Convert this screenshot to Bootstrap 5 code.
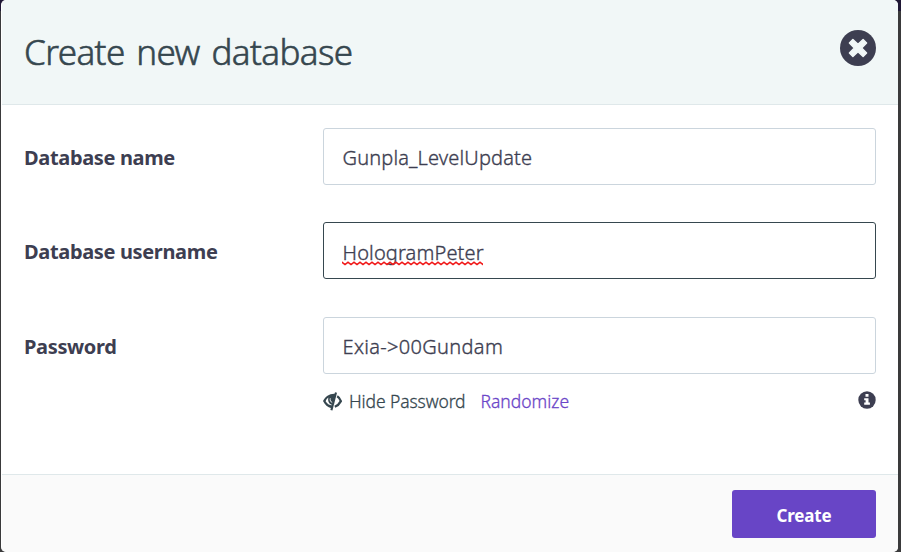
<!DOCTYPE html>
<html lang="en">
<head>
<meta charset="utf-8">
<meta name="viewport" content="width=device-width, initial-scale=1">
<title>Create new database</title>
<link href="https://cdn.jsdelivr.net/npm/bootstrap@5.3.0/dist/css/bootstrap.min.css" rel="stylesheet">
<style>
html,body{height:552px;overflow:hidden}
body{font-family:"Noto Sans","Open Sans",sans-serif;color:#3d3e51;background:linear-gradient(#1f1735 11px,#3a3a3b 11px)}
.dialog-box{width:897px;height:552px;margin-left:1px;background:#fff;border-left:1px solid #fff;border-radius:5px}
.dialog-head{height:105px;padding:0 22px;background:#f1f7f7;border-bottom:1px solid #dfe8ea;border-radius:5px 5px 0 0}
.dialog-title{font-size:35px;line-height:48px;color:#36474f;letter-spacing:-.6px;word-spacing:3.2px;font-weight:300;-webkit-text-stroke:.6px #36474f}
.close-btn{width:36px;height:36px;margin-top:-9px}
.dialog-body{height:369px;padding:23px 22px 0}
.field-row{height:57px;margin-bottom:37px}
.field-row.last-field{margin:38px 0 0}
.field-label{width:299px;font-size:20px;font-weight:700;letter-spacing:-.35px;padding-top:2px}
.form-control{height:57px;border:1px solid #cbd5dd;border-radius:3px;color:#3d3e51;font-size:20px;font-weight:300;line-height:30px;padding:14px 18.5px}
.form-control.current{border-color:#36474f;padding-top:15px}
.entry{display:inline-block;white-space:nowrap;letter-spacing:.15px;-webkit-text-stroke:.35px #3d3e51}
.entry-pass{letter-spacing:.32px}
.squiggle{left:-.5px;top:23px}
.help-row{margin:15px 0 0 299px;height:24px;font-size:17.5px;line-height:24px;font-weight:300;-webkit-text-stroke:.3px}
.eye-mark{margin-right:7px}
.help-text{color:#36474f;letter-spacing:-.1px}
.random-link{color:#6b46c8;margin-left:15px}
.info-mark{margin-top:-2px}
.dialog-foot{height:78px;padding:15px 22px 0;background:#fafafa;border-top:1px solid #dfe8ea;border-radius:0 0 5px 5px}
.create-btn{width:144px;height:48px;background:#6845c6;border:0;border-radius:3px;color:#fff;font-size:17px;font-weight:700;letter-spacing:-.2px;padding:3px 0 0}
</style>
</head>
<body>
<main class="dialog-box d-flex flex-column">
  <header class="dialog-head d-flex align-items-center justify-content-between">
    <h1 class="dialog-title mb-0">Create new database</h1>
    <button class="close-btn btn p-0 border-0 d-flex" type="button" aria-label="Close">
      <svg width="36" height="36" viewBox="0 0 36 36"><circle cx="18" cy="18" r="18" fill="#3d3e51"/><path d="M12.900 9.400 18 14.300 23.100 9.400 26.600 12.900 21.700 18 26.600 23.100 23.100 26.600 18 21.700 12.900 26.600 9.400 23.100 14.300 18 9.400 12.900Z" fill="#f1f7f7" stroke="#f1f7f7" stroke-width="1.400" stroke-linejoin="round"/></svg>
    </button>
  </header>
  <form class="dialog-body">
    <div class="field-row d-flex align-items-center">
      <div class="field-label flex-shrink-0">Database name</div>
      <div class="form-control"><span class="entry">Gunpla_LevelUpdate</span></div>
    </div>
    <div class="field-row mb-0 d-flex align-items-center">
      <div class="field-label flex-shrink-0">Database username</div>
      <div class="form-control current"><span class="entry position-relative">HologramPeter<svg class="squiggle position-absolute" width="141" height="5"><defs><pattern id="wave" width="6" height="5" patternUnits="userSpaceOnUse"><path d="M-1.5 2.5 0 1.200 3 3.600 6 1.200 7.500 2.400" fill="none" stroke="#f01818" stroke-width="1.600"/></pattern></defs><rect width="141" height="5" fill="url(#wave)"/></svg></span></div>
    </div>
    <div class="field-row last-field d-flex align-items-center">
      <div class="field-label flex-shrink-0">Password</div>
      <div class="form-control"><span class="entry entry-pass">Exia-&gt;00Gundam</span></div>
    </div>
    <div class="help-row d-flex align-items-center">
      <svg class="eye-mark flex-shrink-0" width="19" height="19" viewBox="0 0 19 19"><path d="M13 .4 8.400 18.200" stroke="#36474f" stroke-width="2.100"/><path d="M12.400 1.700C6.500 1.200 2.600 4.200 0 9c1.800 3.800 4.500 6.300 8.600 7.200l.7-2.600C6.200 13.200 3.900 11.500 2.600 9.200 3.300 7.600 4.200 6.500 5.400 5.500 4.500 9.200 6 12.200 9.400 12.900Z" fill="#36474f"/><path d="M7 5.500C6.300 8.200 7.200 10.300 9.200 10.800L11 3.500Z" fill="#36474f"/><path d="M7.300 6.300C6.800 8.300 7.600 10 9.200 10.500" fill="none" stroke="#fff" stroke-width=".9"/><path d="M14.200 4.300C16 5.300 17 7 17.900 9.100 16.500 11.800 14.700 13.600 11.800 14.800" fill="none" stroke="#36474f" stroke-width="2.300"/></svg>
      <span class="help-text">Hide Password</span>
      <a class="random-link text-decoration-none" href="#">Randomize</a>
      <svg class="info-mark ms-auto" width="18" height="18" viewBox="0 0 18 18"><circle cx="9" cy="9" r="8.700" fill="#3d3e51"/><path d="M7.500 3h3v2.700h-3zM6.200 7.200h4.300v4.300h1.400v2.200H6.200v-2.200h1.400V9.300H6.200z" fill="#fff"/></svg>
    </div>
  </form>
  <footer class="dialog-foot d-flex justify-content-end">
    <button class="create-btn btn d-flex align-items-center justify-content-center" type="button">Create</button>
  </footer>
</main>
<script src="https://cdn.jsdelivr.net/npm/bootstrap@5.3.0/dist/js/bootstrap.bundle.min.js"></script>
</body>
</html>
